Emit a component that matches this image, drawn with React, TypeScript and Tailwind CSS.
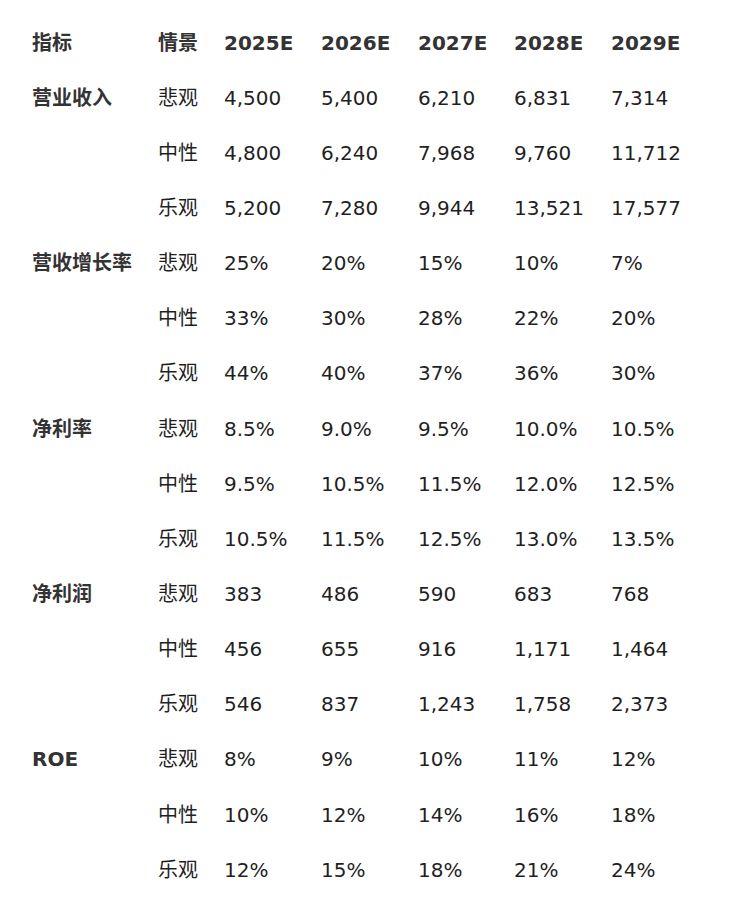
import React from 'react';

const years = ['2025E', '2026E', '2027E', '2028E', '2029E'];

const groups: { name: string; rows: [string, string[]][] }[] = [
  {
    name: '营业收入',
    rows: [
      ['悲观', ['4,500', '5,400', '6,210', '6,831', '7,314']],
      ['中性', ['4,800', '6,240', '7,968', '9,760', '11,712']],
      ['乐观', ['5,200', '7,280', '9,944', '13,521', '17,577']],
    ],
  },
  {
    name: '营收增长率',
    rows: [
      ['悲观', ['25%', '20%', '15%', '10%', '7%']],
      ['中性', ['33%', '30%', '28%', '22%', '20%']],
      ['乐观', ['44%', '40%', '37%', '36%', '30%']],
    ],
  },
  {
    name: '净利率',
    rows: [
      ['悲观', ['8.5%', '9.0%', '9.5%', '10.0%', '10.5%']],
      ['中性', ['9.5%', '10.5%', '11.5%', '12.0%', '12.5%']],
      ['乐观', ['10.5%', '11.5%', '12.5%', '13.0%', '13.5%']],
    ],
  },
  {
    name: '净利润',
    rows: [
      ['悲观', ['383', '486', '590', '683', '768']],
      ['中性', ['456', '655', '916', '1,171', '1,464']],
      ['乐观', ['546', '837', '1,243', '1,758', '2,373']],
    ],
  },
  {
    name: 'ROE',
    rows: [
      ['悲观', ['8%', '9%', '10%', '11%', '12%']],
      ['中性', ['10%', '12%', '14%', '16%', '18%']],
      ['乐观', ['12%', '15%', '18%', '21%', '24%']],
    ],
  },
];

const rowCls =
  'grid grid-cols-[126px_66px_97px_97px_96px_97px_1fr] h-[55.15px] items-center';

export default function App() {
  return (
    <div
      className="bg-white min-h-[900px] w-[738px] pl-[32px] pt-[15px] text-[20px] leading-none text-[#1f1f1f]"
      style={{ fontFamily: '"DejaVu Sans", "Noto Sans CJK SC", sans-serif' }}
    >
      <div className={`${rowCls} font-bold text-[#333]`}>
        <div>指标</div>
        <div>情景</div>
        {years.map((y) => (
          <div key={y}>{y}</div>
        ))}
      </div>
      {groups.map((g) =>
        g.rows.map(([scenario, values], i) => (
          <div key={g.name + scenario} className={rowCls}>
            <div className="font-bold text-[#333]">{i === 0 ? g.name : ''}</div>
            <div>{scenario}</div>
            {values.map((v, j) => (
              <div key={j}>{v}</div>
            ))}
          </div>
        ))
      )}
    </div>
  );
}
